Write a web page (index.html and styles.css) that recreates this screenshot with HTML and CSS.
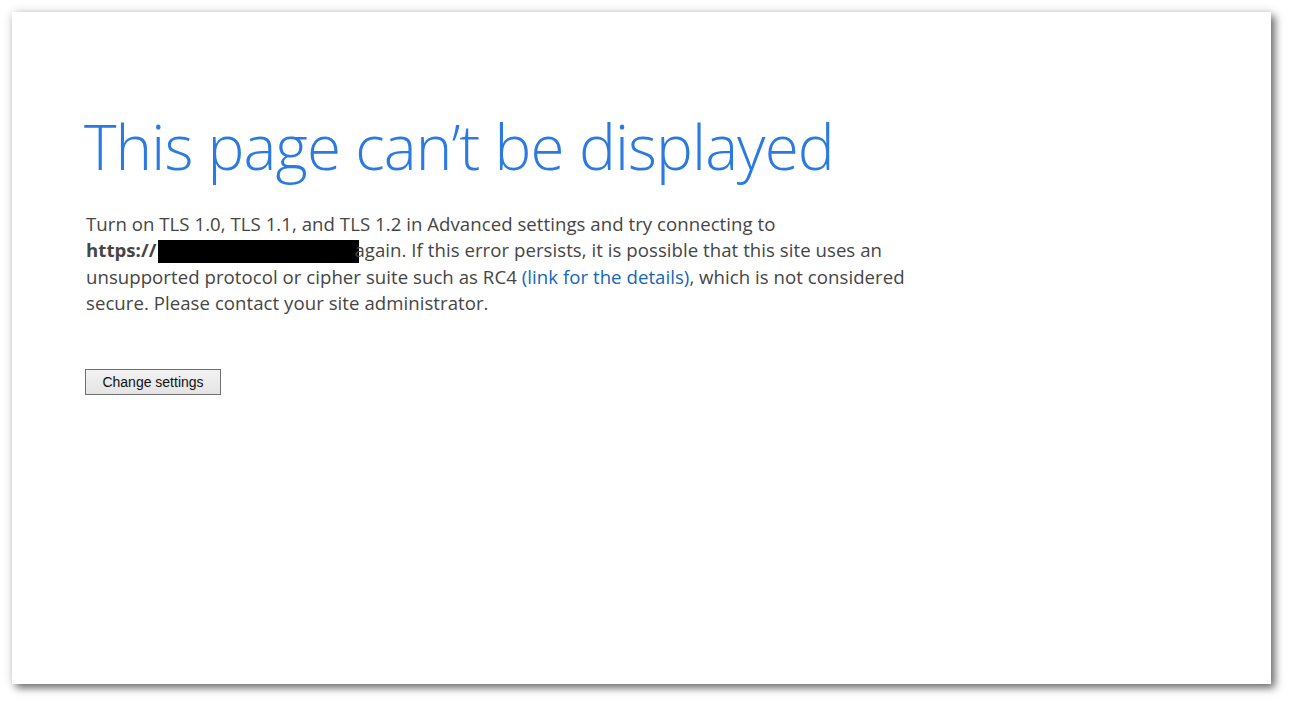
FILE: index.html
```html
<!DOCTYPE html>
<html lang="en">
<head>
<meta charset="utf-8">
<title>This page can’t be displayed</title>
<link rel="stylesheet" href="styles.css">
</head>
<body>
<div class="window">
  <main class="content">
    <h1 class="title">This page can’t be displayed</h1>
    <p class="message">Turn on TLS 1.0, TLS 1.1, and TLS 1.2 in Advanced settings and try connecting to <strong class="url">https://<span class="redact"></span></strong>again. If this error persists, it is possible that this site uses an unsupported protocol or cipher suite such as RC4 <a class="link" href="#">(link for the details)</a>, which is not considered secure. Please contact your site administrator.</p>
    <div class="actions">
      <button class="btn" type="button">Change settings</button>
    </div>
  </main>
</div>
</body>
</html>
```

FILE: styles.css
```css
html, body {
  margin: 0;
  padding: 0;
  background: #ffffff;
}
body {
  width: 1291px;
  height: 704px;
  overflow: hidden;
}
.window {
  margin: 12px 0 0 12px;
  width: 1259px;
  height: 672px;
  background: #ffffff;
  box-shadow: 4px 4px 8px rgba(0, 0, 0, 0.55), 0 0 10px rgba(0, 0, 0, 0.12);
}
.content {
  display: flex;
  flex-direction: column;
  align-items: flex-start;
  padding: 94px 0 0 72px;
}
.title {
  margin: 0;
  font-family: "Open Sans", "Noto Sans", sans-serif;
  font-weight: 300;
  font-size: 62px;
  line-height: 80px;
  color: #2b7ae3;
  letter-spacing: -0.9px;
}
.message {
  margin: 25px 0 0 2px;
  width: 840px;
  font-family: "Open Sans", "Noto Sans", sans-serif;
  font-size: 18.6px;
  line-height: 26.3px;
  color: #454545;
  letter-spacing: 0.05px;
}
.url {
  font-weight: 700;
  white-space: nowrap;
}
.redact {
  display: inline-block;
  width: 201px;
  height: 23px;
  background: #000000;
  vertical-align: -6px;
  margin-left: 2px;
  margin-right: -5px;
}
.link {
  color: #1565bd;
  text-decoration: none;
}
.actions {
  margin: 53px 0 0 1px;
}
.btn {
  font-family: "Liberation Sans", Arial, sans-serif;
  font-size: 14px;
  color: #111111;
  height: 26px;
  width: 136px;
  padding: 0;
  background: linear-gradient(#f2f2f2, #e4e4e4);
  border: 1px solid #707070;
  border-radius: 0;
}
```
